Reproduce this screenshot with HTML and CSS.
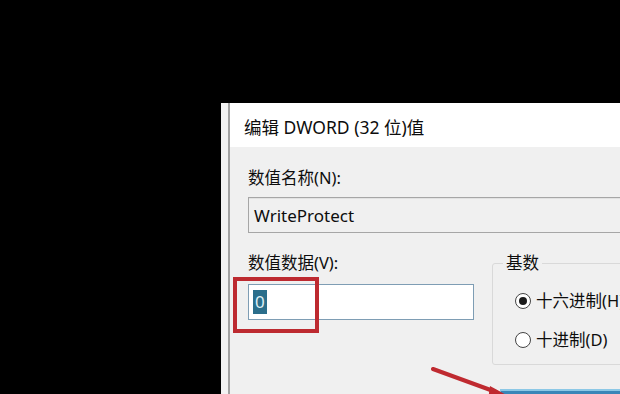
FILE: index.html
```html
<!DOCTYPE html>
<html lang="zh-CN">
<head>
<meta charset="utf-8">
<title>编辑 DWORD (32 位)值</title>
<link rel="stylesheet" href="styles.css">
</head>
<body>
<div class="dialog">
  <div class="window">
    <div class="titlebar">编辑 DWORD (32 位)值</div>
    <div class="content">
      <div class="label">数值名称(N):</div>
      <div class="field field-name">WriteProtect</div>
      <div class="row">
        <div class="value-col">
          <div class="label label-value">数值数据(V):</div>
          <div class="field field-value"><span class="sel">0</span></div>
        </div>
        <fieldset class="base">
          <legend>基数</legend>
          <div class="radio-row"><span class="radio checked"></span><span>十六进制(H)</span></div>
          <div class="radio-row"><span class="radio"></span><span>十进制(D)</span></div>
        </fieldset>
      </div>
      <div class="button-row"><div class="btn-ok"></div></div>
    </div>
  </div>
</div>
<div class="mark-box"></div>
<svg class="arrow" width="620" height="394" viewBox="0 0 620 394">
  <line x1="433" y1="369" x2="496" y2="392" stroke="#bf2a30" stroke-width="4" stroke-linecap="round"/>
  <polygon points="490,386 512,398 488,400" fill="#bf2a30"/>
</svg>
</body>
</html>
```
FILE: styles.css
```css
html, body {
  margin: 0;
  padding: 0;
}
body {
  background: #000;
  width: 620px;
  height: 394px;
  overflow: hidden;
  position: relative;
  font-family: "Noto Sans", "Noto Sans CJK SC", sans-serif;
  color: #0d0d0d;
}
.dialog {
  margin: 103px 0 0 221px;
  width: 520px;
  height: 320px;
  border-left: 7px solid #f3f3f3;
  display: flex;
}
.window {
  flex: 1;
  border-left: 2px solid #a3a3a3;
  background: #f0f0f0;
  display: flex;
  flex-direction: column;
}
.titlebar {
  height: 44px;
  box-sizing: border-box;
  padding: 3px 0 0 14px;
  background: #fff;
  display: flex;
  align-items: center;
  font-size: 17.5px;
  color: #0d0d0d;
}
.content {
  padding: 20px 0 0 18px;
  display: flex;
  flex-direction: column;
}
.label {
  font-size: 16.5px;
  line-height: 22px;
  height: 22px;
}
.field {
  box-sizing: border-box;
  height: 36px;
  font-size: 17px;
  display: flex;
  align-items: center;
  padding-left: 5px;
}
.field-name {
  margin-top: 8px;
  width: 400px;
  background: #f0f0f0;
  border: 1px solid #a6a6a6;
  box-shadow: inset 0 1px 0 #e2e2e2;
}
.row {
  margin-top: 19px;
  display: flex;
  gap: 18px;
  align-items: flex-start;
}
.value-col {
  display: flex;
  flex-direction: column;
}
.field-value {
  margin-top: 10px;
  width: 226px;
  background: #fff;
  border: 1px solid #7e9db4;
  padding-left: 4px;
}
.sel {
  background: #2b6e8b;
  color: #dfeff5;
  padding: 0 2px;
  line-height: 24px;
}
.base {
  margin: 0;
  width: 200px;
  box-sizing: border-box;
  padding: 0 0 12px 10px;
  border: 1px solid #d9d9d9;
  border-radius: 3px;
}
.base legend {
  padding: 0 3px;
  font-size: 16.5px;
  line-height: 22px;
}
.radio-row {
  margin: 15px 0 0 12px;
  display: flex;
  align-items: center;
  gap: 5px;
  font-size: 16.5px;
  line-height: 24px;
  white-space: nowrap;
}
.radio {
  box-sizing: border-box;
  width: 16px;
  height: 16px;
  border-radius: 50%;
  border: 1.5px solid #444;
  background: #fff;
  position: relative;
  flex: none;
}
.radio.checked::after {
  content: "";
  position: absolute;
  left: 2.5px;
  top: 2.5px;
  width: 8px;
  height: 8px;
  border-radius: 50%;
  background: #1a1a1a;
}
.button-row {
  margin-top: 24px;
  padding-left: 252px;
}
.btn-ok {
  width: 130px;
  height: 30px;
  box-sizing: border-box;
  border-top: 2px solid #8cc8e6;
  border-left: 1px solid #8cc8e6;
  background: #3a86b8;
}
.mark-box {
  position: absolute;
  left: 233px;
  top: 277px;
  width: 86px;
  height: 56px;
  box-sizing: border-box;
  border: 4px solid #bd2a30;
}
.arrow {
  position: absolute;
  left: 0;
  top: 0;
}
```
